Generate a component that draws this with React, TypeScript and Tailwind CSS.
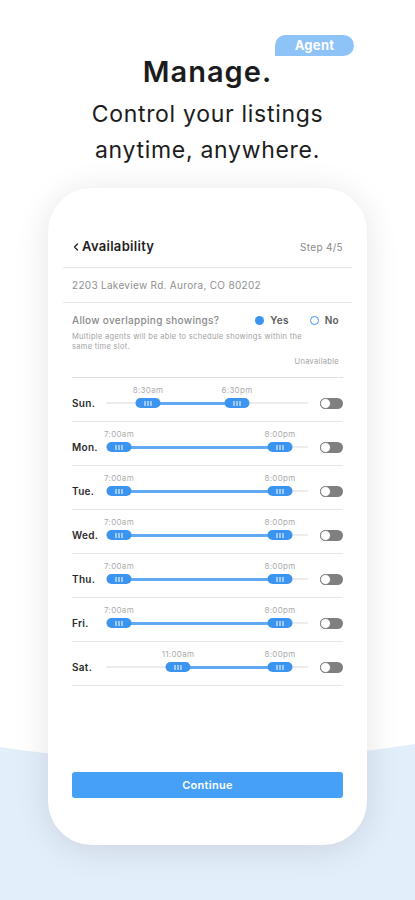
import { ChevronLeft } from 'lucide-react';

type Day = { name: string; from: number; to: number; fromLabel: string; toLabel: string };

// thumb centers are px offsets inside the 202px track
const days: Day[] = [
  { name: 'Sun.', from: 42, to: 131, fromLabel: '8:30am', toLabel: '6:30pm' },
  { name: 'Mon.', from: 13, to: 174, fromLabel: '7:00am', toLabel: '8:00pm' },
  { name: 'Tue.', from: 13, to: 174, fromLabel: '7:00am', toLabel: '8:00pm' },
  { name: 'Wed.', from: 13, to: 174, fromLabel: '7:00am', toLabel: '8:00pm' },
  { name: 'Thu.', from: 13, to: 174, fromLabel: '7:00am', toLabel: '8:00pm' },
  { name: 'Fri.', from: 13, to: 174, fromLabel: '7:00am', toLabel: '8:00pm' },
  { name: 'Sat.', from: 72, to: 174, fromLabel: '11:00am', toLabel: '8:00pm' },
];

function Thumb({ x }: { x: number }) {
  return (
    <div
      className="absolute top-[13px] h-[10px] w-[25px] -translate-x-1/2 rounded-full bg-[#3b94ef] flex items-center justify-center gap-[2px]"
      style={{ left: x }}
    >
      <span className="w-px h-[5px] bg-white" />
      <span className="w-px h-[5px] bg-white" />
      <span className="w-px h-[5px] bg-white" />
    </div>
  );
}

function DayRow({ day }: { day: Day }) {
  return (
    <div className="flex items-end pt-[7px] pb-[12px] border-b border-[#e6e6e6]">
      <div className="w-[34px] h-[12px] leading-[12px] text-[10px] font-semibold text-[#2a2a2a]">{day.name}</div>
      <div className="relative w-[202px] h-[24px]">
        <span className="absolute top-0 -translate-x-1/2 leading-[10px] text-[8px] text-[#ababab] whitespace-nowrap" style={{ left: day.from }}>
          {day.fromLabel}
        </span>
        <span className="absolute top-0 -translate-x-1/2 leading-[10px] text-[8px] text-[#ababab] whitespace-nowrap" style={{ left: day.to }}>
          {day.toLabel}
        </span>
        <div className="absolute left-0 right-0 top-[17px] h-[2px] bg-[#ececec] rounded-full" />
        <div className="absolute top-[16.5px] h-[3px] bg-[#62a9f4]" style={{ left: day.from, width: day.to - day.from }} />
        <Thumb x={day.from} />
        <Thumb x={day.to} />
      </div>
      <div className="ml-[12px] mb-[0.5px] relative w-[23px] h-[11px] rounded-full bg-[#7f7f7f]">
        <div className="absolute left-0 top-0 w-[11px] h-[11px] rounded-full bg-white border border-[#7f7f7f]" />
      </div>
    </div>
  );
}

export default function App() {
  return (
    <div className="relative w-[415px] h-[900px] overflow-hidden bg-white font-['Inter',sans-serif]">
      <svg className="absolute left-0 top-0" width="415" height="900" viewBox="0 0 415 900">
        <path d="M0 747 Q200 778 415 744 L415 900 L0 900 Z" fill="#e3eefb" />
      </svg>

      <div className="absolute left-[275px] top-[35px] w-[79px] h-[21px] rounded-tl-full rounded-r-full bg-[#8ec3f8] flex items-center justify-center text-[13px] font-bold text-white tracking-[0.3px]">
        Agent
      </div>

      <div className="relative flex flex-col items-center pt-[55px]">
        <h1 className="text-[29px] leading-[34px] font-semibold text-[#1c1c1c] tracking-[1px]">Manage.</h1>
        <p className="mt-[7px] text-[23px] leading-[36px] text-center text-[#1c1c1c] tracking-[0.7px]">
          Control your listings
          <br />
          anytime, anywhere.
        </p>

        <div className="mt-[20px] w-[319px] h-[657px] rounded-[44px] bg-white shadow-[0_4px_34px_rgba(0,0,0,0.11)] flex flex-col pt-[50px] px-[15px] tracking-[0.3px]">
          <div className="flex items-center justify-between h-[18px] px-[9px] box-content pb-[11px] border-b border-[#e6e6e6]">
            <div className="flex items-center text-[13px] font-semibold text-[#1e1e1e]">
              <ChevronLeft size={12} strokeWidth={2.5} className="-ml-[2px]" />
              Availability
            </div>
            <span className="text-[10px] text-[#8a8a8a]">Step 4/5</span>
          </div>

          <div className="px-[9px] py-[9px] leading-[16px] text-[10px] text-[#8f8f8f] border-b border-[#e6e6e6]">
            2203 Lakeview Rd. Aurora, CO 80202
          </div>

          <div className="px-[9px] pt-[10px]">
            <div className="flex items-center h-[14px] text-[10px]">
              <span className="font-medium text-[#8a8a8a]">Allow overlapping showings?</span>
              <span className="ml-auto w-[9px] h-[9px] rounded-full bg-[#3b94ef]" />
              <span className="ml-[6px] font-semibold text-[#5a5a5a]">Yes</span>
              <span className="ml-[21px] w-[9px] h-[9px] rounded-full border-[1.5px] border-[#3b94ef]" />
              <span className="ml-[6px] mr-[4px] font-semibold text-[#5a5a5a]">No</span>
            </div>
            <p className="mt-[5px] text-[7.5px] leading-[10px] text-[#a0a0a0] pr-[20px]">
              Multiple agents will be able to schedule showings within the same time slot.
            </p>
            <div className="mt-[5px] text-right text-[7.5px] leading-[10px] text-[#a0a0a0] pr-[4px]">Unavailable</div>
            <div className="mt-[10px] border-t border-[#e0e0e0]">
              {days.map((d) => (
                <DayRow key={d.name} day={d} />
              ))}
            </div>
          </div>

          <button className="mt-auto mb-[47px] mx-[9px] h-[26px] rounded-[3px] bg-[#46a0f5] text-white text-[11px] font-semibold">
            Continue
          </button>
        </div>
      </div>
    </div>
  );
}
